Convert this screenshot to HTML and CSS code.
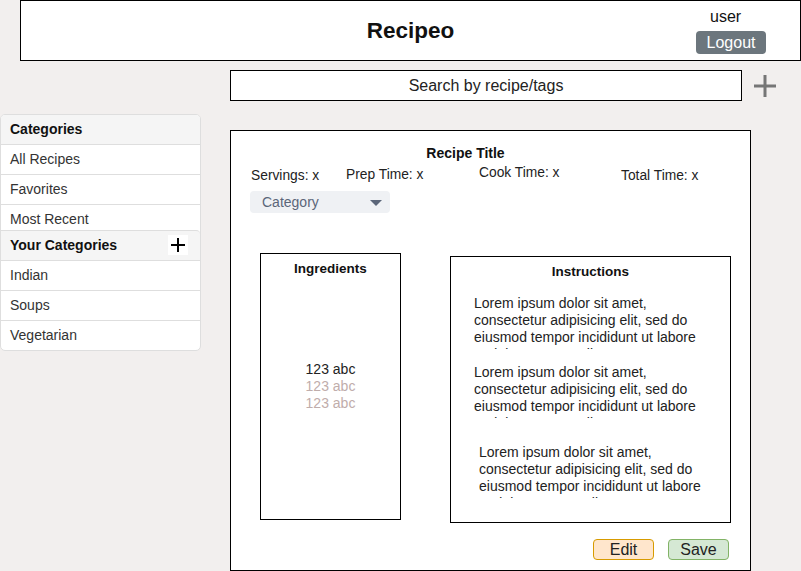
FILE: index.html
```html
<!DOCTYPE html>
<html lang="en">
<head>
<meta charset="utf-8">
<title>Recipeo</title>
<link rel="stylesheet" href="styles.css">
</head>
<body>
<header class="topbar">
  <div class="topbar-spacer"></div>
  <h1 class="brand">Recipeo</h1>
  <div class="account">
    <span class="account-name">user</span>
    <button class="btn-logout">Logout</button>
  </div>
</header>

<div class="search-row">
  <div class="search-box">Search by recipe/tags</div>
  <svg class="add-recipe" width="22" height="24" viewBox="0 0 22 24" aria-hidden="true">
    <path d="M11 1V23M0 12H22" stroke="#767676" stroke-width="3" fill="none"/>
  </svg>
</div>

<div class="content">
  <nav class="sidebar">
    <div class="side-head">Categories</div>
    <div class="side-item">All Recipes</div>
    <div class="side-item">Favorites</div>
    <div class="side-item side-item-clipped">Most Recent</div>
    <div class="side-head side-head-split">
      <span>Your Categories</span>
      <span class="mini-add">
        <svg width="16" height="16" viewBox="0 0 16 16" aria-hidden="true">
          <path d="M8 1V15M1 8H15" stroke="#000" stroke-width="2" fill="none"/>
        </svg>
      </span>
    </div>
    <div class="side-item">Indian</div>
    <div class="side-item">Soups</div>
    <div class="side-item side-item-last">Vegetarian</div>
  </nav>

  <main class="recipe">
    <h2 class="recipe-title">Recipe Title</h2>
    <div class="meta">
      <span class="meta-item meta-servings">Servings: x</span>
      <span class="meta-item meta-prep">Prep Time: x</span>
      <span class="meta-item meta-cook">Cook Time: x</span>
      <span class="meta-item meta-total">Total Time: x</span>
    </div>
    <div class="dropdown">
      <span>Category</span>
      <span class="caret"></span>
    </div>

    <div class="panels">
      <section class="ingredients">
        <h3 class="panel-title">Ingredients</h3>
        <ul class="ing-list">
          <li>123 abc</li>
          <li class="muted">123 abc</li>
          <li class="muted">123 abc</li>
        </ul>
      </section>
      <section class="instructions">
        <h3 class="panel-title">Instructions</h3>
        <p class="step step-1">Lorem ipsum dolor sit amet, consectetur adipisicing elit, sed do eiusmod tempor incididunt ut labore et dolore magna aliqua.</p>
        <p class="step step-2">Lorem ipsum dolor sit amet, consectetur adipisicing elit, sed do eiusmod tempor incididunt ut labore et dolore magna aliqua.</p>
        <p class="step step-3">Lorem ipsum dolor sit amet, consectetur adipisicing elit, sed do eiusmod tempor incididunt ut labore et dolore magna aliqua.</p>
      </section>
    </div>

    <div class="actions">
      <button class="btn btn-edit">Edit</button>
      <button class="btn btn-save">Save</button>
    </div>
  </main>
</div>
</body>
</html>
```

FILE: styles.css
```css
* { box-sizing: border-box; }

html, body {
  margin: 0;
  padding: 0;
}

body {
  background: #f2efee;
  font-family: "Liberation Sans", Arial, sans-serif;
  color: #222;
  width: 801px;
  height: 571px;
  overflow: hidden;
}

/* header */
.topbar {
  margin-left: 20px;
  width: 781px;
  height: 61px;
  border: 1px solid #000;
  background: #fff;
  display: grid;
  grid-template-columns: 1fr auto 1fr;
}

.brand {
  margin: 0;
  align-self: center;
  font-size: 22.5px;
  font-weight: bold;
  color: #111;
  line-height: 26px;
}

.account {
  justify-self: end;
  margin-right: 34px;
  padding-top: 7px;
  display: flex;
  flex-direction: column;
  align-items: flex-start;
  width: 70px;
}

.account-name {
  margin-left: 14px;
  font-size: 16px;
  line-height: 18px;
  color: #111;
}

.btn-logout {
  margin-top: 5px;
  width: 70px;
  height: 23px;
  padding: 0;
  border: none;
  border-radius: 4px;
  background: #6c767d;
  color: #fff;
  font-family: inherit;
  font-size: 16px;
  line-height: 23px;
}

/* search */
.search-row {
  margin-top: 9px;
  margin-left: 230px;
  display: flex;
  align-items: center;
}

.search-box {
  width: 512px;
  height: 31px;
  border: 1px solid #000;
  background: #fff;
  text-align: center;
  font-size: 16px;
  line-height: 29px;
  color: #222;
}

.add-recipe {
  margin-left: 12px;
  display: block;
}

/* content */
.content {
  display: flex;
  align-items: flex-start;
}

.sidebar {
  margin-top: 13px;
  width: 201px;
  border: 1px solid #dedede;
  border-radius: 5px;
  background: #fff;
  overflow: hidden;
  font-size: 14px;
}

.side-head {
  height: 30px;
  line-height: 29px;
  padding-left: 9px;
  background: #f5f5f5;
  border-bottom: 1px solid #dedede;
  font-weight: bold;
  color: #111;
}

.side-head-split {
  height: 31px;
  border-top: 1px solid #dedede;
  border-top-right-radius: 4px;
  display: flex;
  justify-content: space-between;
  align-items: center;
  padding-right: 12px;
}

.mini-add {
  width: 20px;
  height: 20px;
  background: #fff;
  display: flex;
  align-items: center;
  justify-content: center;
  margin-top: -2px;
}

.mini-add svg { display: block; }

.side-item {
  height: 30px;
  line-height: 29px;
  padding-left: 9px;
  border-bottom: 1px solid #dedede;
  color: #333;
}

.side-item-clipped {
  height: 25px;
  border-bottom: none;
  overflow: hidden;
}

.side-item-last {
  border-bottom: none;
  height: 29px;
}

/* recipe panel */
.recipe {
  margin-top: 29px;
  margin-left: 29px;
  width: 521px;
  height: 441px;
  border: 1px solid #000;
  background: #fff;
  padding-top: 14px;
  display: flex;
  flex-direction: column;
}

.recipe-title {
  margin: 0;
  padding-right: 50px;
  text-align: center;
  font-size: 14px;
  line-height: 16px;
  font-weight: bold;
  color: #111;
}

.meta {
  margin-top: 3px;
  margin-left: 20px;
  display: flex;
  align-items: flex-start;
  font-size: 13.8px;
  line-height: 16px;
  color: #222;
}

.meta-servings { width: 95px; margin-top: 4px; }
.meta-prep { width: 133px; margin-top: 3px; }
.meta-cook { width: 142px; margin-top: 1px; }
.meta-total { margin-top: 4px; }

.dropdown {
  margin-top: 7px;
  margin-left: 19px;
  width: 140px;
  height: 22px;
  background: #eff1f4;
  border-radius: 4px;
  padding: 0 8px 0 12px;
  display: flex;
  align-items: center;
  justify-content: space-between;
  font-size: 14px;
  color: #5b6679;
}

.caret {
  width: 0;
  height: 0;
  border-left: 6px solid transparent;
  border-right: 6px solid transparent;
  border-top: 6px solid #5b6679;
  margin-top: 1px;
}

.panels {
  margin-top: 40px;
  display: flex;
  align-items: flex-start;
}

.ingredients {
  margin-left: 29px;
  width: 141px;
  height: 267px;
  border: 1px solid #000;
  padding-top: 6px;
  text-align: center;
}

.panel-title {
  margin: 0;
  font-size: 13.5px;
  line-height: 17px;
  font-weight: bold;
  color: #111;
}

.ing-list {
  list-style: none;
  margin: 84px 0 0;
  padding: 0;
  font-size: 14px;
  line-height: 17px;
}

.ing-list li { color: #222; }
.ing-list .muted { color: #bfadab; }

.instructions {
  margin-top: 3px;
  margin-left: 49px;
  width: 281px;
  height: 267px;
  border: 1px solid #000;
  padding-top: 6px;
}

.instructions .panel-title { text-align: center; }

.step {
  margin: 0;
  margin-left: 23px;
  width: 232px;
  height: 54px;
  overflow: hidden;
  font-size: 14px;
  line-height: 17px;
  color: #222;
}

.step-1 { margin-top: 15px; }
.step-2 { margin-top: 15px; }
.step-3 { margin-top: 26px; margin-left: 28px; }

.actions {
  margin-top: 16px;
  padding-right: 21px;
  display: flex;
  justify-content: flex-end;
  gap: 14px;
}

.btn {
  width: 61px;
  height: 21px;
  padding: 0;
  border-radius: 4px;
  font-family: inherit;
  font-size: 16px;
  line-height: 19px;
  color: #222;
}

.btn-edit {
  background: #ffe6cc;
  border: 1px solid #d79b00;
}

.btn-save {
  background: #d5e8d4;
  border: 1px solid #82b366;
}
```
